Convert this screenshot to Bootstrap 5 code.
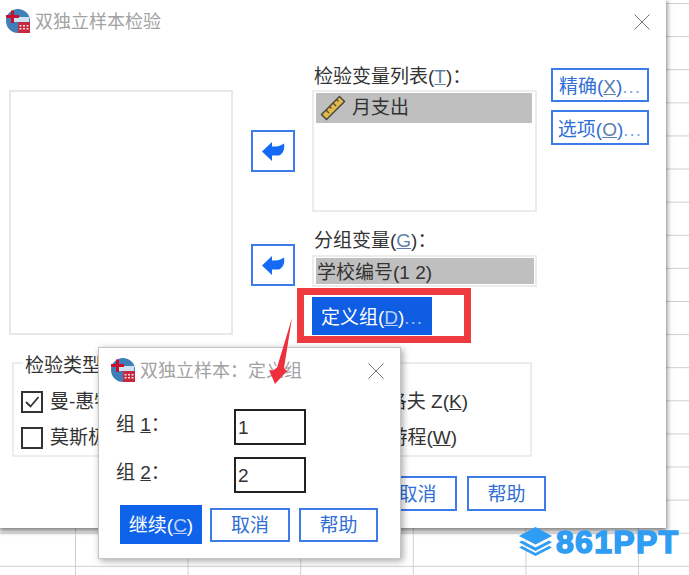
<!doctype html>
<html lang="zh">
<head>
<meta charset="utf-8">
<title>双独立样本检验</title>
<link href="https://cdn.jsdelivr.net/npm/bootstrap@5.3.0/dist/css/bootstrap.min.css" rel="stylesheet">
<style>
html,body{margin:0;height:575px;overflow:hidden}
body{position:relative;font-family:"Liberation Sans","Noto Sans CJK SC",sans-serif;font-size:19px;line-height:26px;color:#333;
 background-color:#fff;
 background-image:linear-gradient(#cfcfcf 1px,transparent 1px),linear-gradient(90deg,#cfcfcf 1px,transparent 1px);
 background-size:100% 33.12px,112.6px 100%;background-position:0 3px,75px 0}
svg{display:block;flex:none}
.win-main{position:absolute;left:0;top:0;width:666px;height:528px;background:#fff;box-shadow:0 2px 5px 1px rgba(0,0,0,.5)}
.win-sub{position:absolute;left:98px;top:347px;width:303px;height:212px;background:#fff;border:1px solid #c4c4c4;box-shadow:2px 2px 7px rgba(0,0,0,.35)}
.title-main{height:44px;padding:9px 16px 0 6px}
.title-sub{height:46px;padding:10px 16px 0 12px}
.title-text{font-size:18px;line-height:26px;color:#a2a2a2;margin-left:5px;white-space:nowrap}
.win-x{margin-left:auto;margin-top:5px}
.main-top{height:299px}
.left-list{margin:46px 0 0 9px;width:224px;height:245px;border:2px solid #e8e8e8}
.arrow-col{margin:86px 0 0 18px;width:44px;row-gap:72px}
.arrow-btn{width:44px;height:42px;padding:0;border-radius:0;border:2px solid #3b7bea;background:#fff}
.center-col{margin:20px 0 0 17px;width:225px}
.lab{padding-left:2px;height:26px;white-space:nowrap;color:#333}
.lab-2{height:43px;padding-top:16px}
.lab u,.btn-line u{color:#5d7faa}
.var-box{border:2px solid #ececec;padding:1px 3px 0 2px;background:#fff}
.box-a{height:122px}
.box-b{height:32px;padding-right:1px}
.sel-row{background:#bfbfbf;height:30px;line-height:32px;padding-left:4px;column-gap:6px;color:#333}
.box-b .sel-row{height:26px;line-height:29px;padding-left:1px;white-space:nowrap}
.red-frame{margin:1px 0 0 -15px;width:174px;height:55px;border:7px solid #ef3a3f;padding:2px 0 0 8px}
.btn-fill{background:#0f5de2;border:0;border-radius:0;color:#fff;padding:2px 0 0;font-size:19px;line-height:26px;white-space:nowrap}
.btn-fill:hover{background:#0f5de2;color:#fff}
.btn-fill u{color:#b9cff5}
.btn-fill i,.btn-line i{font-style:normal;opacity:.6;letter-spacing:1px}
.def-btn{width:120px;height:38px;padding-top:4px}
.right-col{margin:24px 0 0 14px;width:98px;row-gap:8px}
.btn-line{border:2px solid #3b7bea;border-radius:0;background:#fff;color:#2f6fd6;padding:2px 0 0;font-size:19px;line-height:26px;white-space:nowrap}
.btn-line:hover{background:#fff;color:#2f6fd6}
.btn-side{width:98px;height:34px;padding-top:4px}
.btn-side + .btn-side{height:35px}
.type-box{margin:7px 0 0 12px;width:520px;height:107px;border:2px solid #ececec;padding:0 0 0 7px}
.type-box legend{float:none;width:auto;margin:0 0 0 2px;padding:6px 2px 0;font-size:19px;line-height:20px;color:#333}
.type-row{height:36px}
.type-row-1{margin-top:8px}
.check{column-gap:7px;white-space:nowrap}
.end-k{margin-left:auto;margin-right:62px}
.end-w{margin-left:auto;margin-right:73px}
.foot-main{margin:19px 120px 0 0;column-gap:10px}
.btn-foot{width:79px;height:35px}
.sub-body{padding:15px 0 0 17px}
.sub-row{height:36px;margin-bottom:12px}
.sub-lab{width:118px;height:32px;line-height:32px;white-space:nowrap;color:#333}
.sub-input{width:72px;height:36px;flex:none;border:2px solid #222;border-radius:0;padding:2px 0 0 2px;font-family:inherit;font-size:19px;line-height:26px;color:#333;box-shadow:none}
.sub-foot{padding-left:21px;column-gap:8px}
.btn-go{width:82px;height:39px;background:#0f63ea}
.btn-go-2{width:80px;height:34px}
.btn-go-3{width:79px;height:34px;margin-left:1px}
.overlay-svg{position:absolute;left:0;top:0;pointer-events:none}
.wm{position:absolute;left:519px;top:527px;column-gap:4px}
.wm-text{font-family:"Liberation Sans",sans-serif;font-weight:700;font-size:32px;line-height:28px;color:#2f9df4;-webkit-text-stroke:1.5px #2f9df4;letter-spacing:1.3px}
</style>
</head>
<body>

<div class="win-main">
  <div class="title-main d-flex align-items-start">
    <svg width="24" height="24" viewBox="0 0 24 24">
      <circle cx="12" cy="12" r="12" fill="#3f7fb8"/>
      <path d="M6 8h17v5H6z" fill="#cfe2f2"/>
      <path d="M5 1.500h3v4.500h5v3H8v5H5V9H0V6h5z" fill="#c8102e"/>
      <rect x="12" y="13" width="12" height="11" fill="#c6283f"/>
      <path d="M13.500 16h2v1.500h-2zM17 16h2v1.500h-2zM20.500 16h2v1.500h-2zM13.500 19h2v1.500h-2zM17 19h2v1.500h-2zM20.500 19h2v1.500h-2z" fill="#f6dfe0"/>
    </svg>
    <span class="title-text">双独立样本检验</span>
    <svg class="win-x" width="16" height="16" viewBox="0 0 16 16"><path d="M.5.5l15 15M15.500.5l-15 15" stroke="#777" stroke-width="1" fill="none"/></svg>
  </div>

  <div class="main-top d-flex align-items-start">
    <div class="left-list"></div>
    <div class="arrow-col d-flex flex-column">
      <button class="arrow-btn btn d-flex align-items-center justify-content-center" type="button" aria-label="移入">
        <svg width="23" height="19" viewBox="0 0 23 19"><path d="M0 9.500L10 0v4.500c4 0 8 0 12-3 1 6-1 10-5 12H10V19z" fill="#1469f5"/></svg>
      </button>
      <button class="arrow-btn btn d-flex align-items-center justify-content-center" type="button" aria-label="移入">
        <svg width="23" height="19" viewBox="0 0 23 19"><path d="M0 9.500L10 0v4.500c4 0 8 0 12-3 1 6-1 10-5 12H10V19z" fill="#1469f5"/></svg>
      </button>
    </div>
    <div class="center-col d-flex flex-column">
      <div class="lab">检验变量列表(<u>T</u>)：</div>
      <div class="var-box box-a">
        <div class="sel-row d-flex align-items-center">
          <svg width="26" height="26" viewBox="0 0 26 26">
            <path d="M1.500 19.500L19.500 1.500l5 5-18 18z" fill="#e3b94d" stroke="#4a4a3a" stroke-width="1.500"/>
            <path d="M6 15l3 3M9.500 11.500l2 2M13 8l3 3M16.500 4.500l2 2" stroke="#4a4a3a" stroke-width="1.300"/>
          </svg>
          <span>月支出</span>
        </div>
      </div>
      <div class="lab lab-2">分组变量(<u>G</u>)：</div>
      <div class="var-box box-b">
        <div class="sel-row">学校编号(1 2)</div>
      </div>
      <div class="red-frame">
        <button class="btn btn-fill def-btn" type="button">定义组(<u>D</u>)<i>...</i></button>
      </div>
    </div>
    <div class="right-col d-flex flex-column">
      <button class="btn btn-line btn-side" type="button">精确(<u>X</u>)<i>...</i></button>
      <button class="btn btn-line btn-side" type="button">选项(<u>O</u>)<i>...</i></button>
    </div>
  </div>

  <fieldset class="type-box">
    <legend>检验类型</legend>
    <div class="type-row type-row-1 d-flex align-items-center">
      <label class="check d-flex align-items-center">
        <svg width="22" height="22" viewBox="0 0 22 22"><rect x="1" y="1" width="20" height="20" fill="#fff" stroke="#333" stroke-width="2"/><path d="M5 11l4.500 4.500L17.500 6" fill="none" stroke="#333" stroke-width="1.800"/></svg>
        <span>曼-惠特</span>
      </label>
      <span class="end-k">柯尔莫戈洛夫 Z(<u>K</u>)</span>
    </div>
    <div class="type-row d-flex align-items-center">
      <label class="check d-flex align-items-center">
        <svg width="22" height="22" viewBox="0 0 22 22"><rect x="1" y="1" width="20" height="20" fill="#fff" stroke="#333" stroke-width="2"/></svg>
        <span>莫斯极</span>
      </label>
      <span class="end-w">瓦尔德游程(<u>W</u>)</span>
    </div>
  </fieldset>

  <div class="foot-main d-flex justify-content-end">
    <button class="btn btn-line btn-foot" type="button">取消</button>
    <button class="btn btn-line btn-foot" type="button">帮助</button>
  </div>
</div>

<div class="win-sub">
  <div class="title-sub d-flex align-items-start">
    <svg width="24" height="24" viewBox="0 0 24 24">
      <circle cx="12" cy="12" r="12" fill="#3f7fb8"/>
      <path d="M6 8h17v5H6z" fill="#cfe2f2"/>
      <path d="M5 1.500h3v4.500h5v3H8v5H5V9H0V6h5z" fill="#c8102e"/>
      <rect x="12" y="13" width="12" height="11" fill="#c6283f"/>
      <path d="M13.500 16h2v1.500h-2zM17 16h2v1.500h-2zM20.500 16h2v1.500h-2zM13.500 19h2v1.500h-2zM17 19h2v1.500h-2zM20.500 19h2v1.500h-2z" fill="#f6dfe0"/>
    </svg>
    <span class="title-text">双独立样本：定义组</span>
    <svg class="win-x" width="16" height="16" viewBox="0 0 16 16"><path d="M.5.5l15 15M15.500.5l-15 15" stroke="#777" stroke-width="1" fill="none"/></svg>
  </div>
  <div class="sub-body">
    <div class="sub-row d-flex align-items-start">
      <span class="sub-lab">组 <u>1</u>：</span>
      <input class="form-control sub-input" type="text" value="1" aria-label="组 1">
    </div>
    <div class="sub-row d-flex align-items-start">
      <span class="sub-lab">组 <u>2</u>：</span>
      <input class="form-control sub-input" type="text" value="2" aria-label="组 2">
    </div>
  </div>
  <div class="sub-foot d-flex align-items-center">
    <button class="btn btn-fill btn-go" type="button">继续(<u>C</u>)</button>
    <button class="btn btn-line btn-go-2" type="button">取消</button>
    <button class="btn btn-line btn-go-3" type="button">帮助</button>
  </div>
</div>

<svg class="overlay-svg" width="689" height="575" viewBox="0 0 689 575" aria-hidden="true">
  <path d="M292 318L284 368l3 3-12 13-6-14 4 .5 4-3z" fill="#ee2f3e"/>
</svg>

<div class="wm d-flex align-items-center">
  <svg width="33" height="29" viewBox="0 0 33 29">
    <path d="M16.500 0L33 9 16.500 17.500 0 9z" fill="#2f9df4"/>
    <path d="M3 13.500l13.500 7 13.500-7 3 1.700-16.500 8.800L0 15.200z" fill="#2f9df4"/>
    <path d="M3 19l13.500 7 13.500-7 3 1.500L16.500 29 0 20.500z" fill="#2f9df4"/>
  </svg>
  <span class="wm-text">861PPT</span>
</div>

</body>
</html>
